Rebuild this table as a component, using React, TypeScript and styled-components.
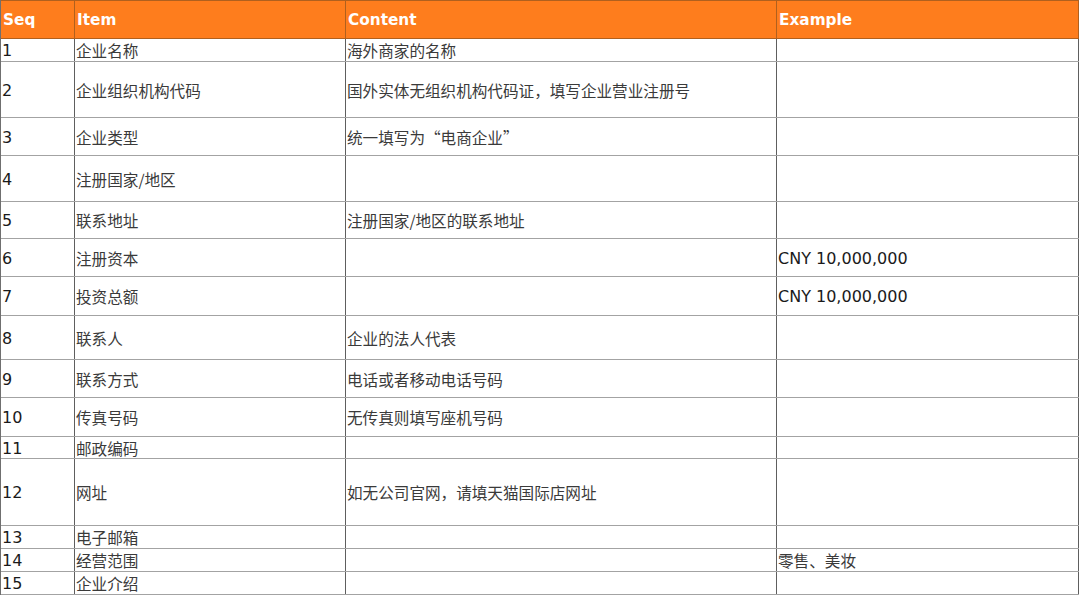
import React from "react";
import styled, { createGlobalStyle } from "styled-components";

const GlobalStyle = createGlobalStyle`
  html, body { margin: 0; padding: 0; background: #ffffff; }
  body { font-family: "DejaVu Sans", "Noto Sans CJK SC", sans-serif; }
`;

const Sheet = styled.div`
  width: 1079px;
  border-left: 1px solid #6f6f6f;
  box-sizing: border-box;
`;

const Row = styled.div<{ $h: number; $head?: boolean }>`
  display: grid;
  grid-template-columns: 74px 271px 431px 302px;
  height: ${(p) => p.$h}px;
  box-sizing: border-box;
  border-bottom: 1px solid ${(p) => (p.$head ? "#b0601e" : "#a3a3a3")};
  border-top: ${(p) => (p.$head ? "1px solid #b0601e" : "none")};
  background: ${(p) => (p.$head ? "#fe7d1d" : "#ffffff")};
`;

const Cell = styled.div<{ $head?: boolean; $latin?: boolean }>`
  display: flex;
  align-items: center;
  box-sizing: border-box;
  padding-left: ${(p) => (p.$head ? "2px" : "1px")};
  padding-top: 2px;
  border-right: 1px solid ${(p) => (p.$head ? "#b0601e" : "#5e5e5e")};
  overflow: hidden;
  white-space: nowrap;
  font-family: ${(p) =>
    p.$head || p.$latin
      ? `"DejaVu Sans", "Noto Sans CJK SC", sans-serif`
      : `"Noto Sans CJK SC", "DejaVu Sans", sans-serif`};
  font-size: ${(p) => (p.$head ? "15.3px" : p.$latin ? "16px" : "15.6px")};
  font-weight: ${(p) => (p.$head ? 700 : 400)};
  color: ${(p) => (p.$head ? "#ffffff" : p.$latin ? "#1a1a1a" : "#3a3a3a")};
  line-height: 1;
`;

type RowData = { h: number; item: string; content: string; example: string };

const rows: RowData[] = [
  { h: 23, item: "企业名称", content: "海外商家的名称", example: "" },
  { h: 56, item: "企业组织机构代码", content: "国外实体无组织机构代码证，填写企业营业注册号", example: "" },
  { h: 38, item: "企业类型", content: "统一填写为“电商企业”", example: "" },
  { h: 46, item: "注册国家/地区", content: "", example: "" },
  { h: 37, item: "联系地址", content: "注册国家/地区的联系地址", example: "" },
  { h: 38, item: "注册资本", content: "", example: "CNY 10,000,000" },
  { h: 39, item: "投资总额", content: "", example: "CNY 10,000,000" },
  { h: 44, item: "联系人", content: "企业的法人代表", example: "" },
  { h: 38, item: "联系方式", content: "电话或者移动电话号码", example: "" },
  { h: 39, item: "传真号码", content: "无传真则填写座机号码", example: "" },
  { h: 22, item: "邮政编码", content: "", example: "" },
  { h: 67, item: "网址", content: "如无公司官网，请填天猫国际店网址", example: "" },
  { h: 23, item: "电子邮箱", content: "", example: "" },
  { h: 23, item: "经营范围", content: "", example: "零售、美妆" },
  { h: 23, item: "企业介绍", content: "", example: "" },
];

export default function App() {
  return (
    <>
      <GlobalStyle />
      <Sheet>
        <Row $h={39} $head>
          <Cell $head>Seq</Cell>
          <Cell $head>Item</Cell>
          <Cell $head>Content</Cell>
          <Cell $head>Example</Cell>
        </Row>
        {rows.map((r, i) => (
          <Row key={i} $h={r.h}>
            <Cell $latin>{i + 1}</Cell>
            <Cell>{r.item}</Cell>
            <Cell>{r.content}</Cell>
            <Cell $latin={r.example.startsWith("CNY")}>{r.example}</Cell>
          </Row>
        ))}
      </Sheet>
    </>
  );
}
